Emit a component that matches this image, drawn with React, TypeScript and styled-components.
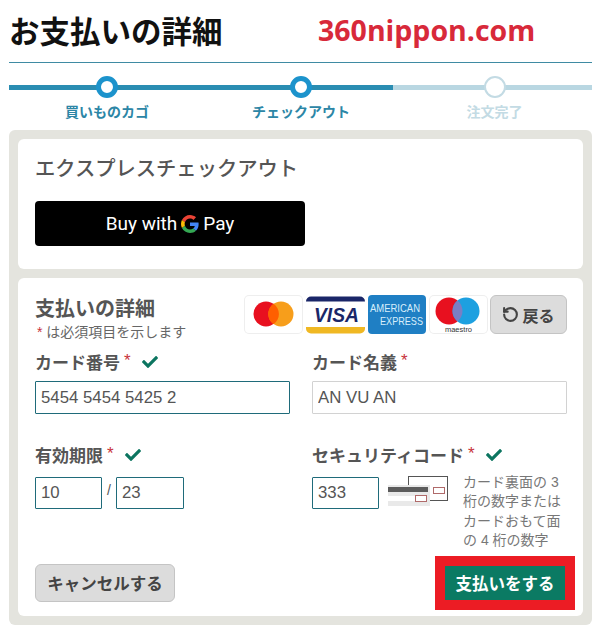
import React from "react";
import styled, { createGlobalStyle } from "styled-components";
import { FaCheck } from "react-icons/fa";
import { RotateCcw } from "lucide-react";

const JP = `"Liberation Sans", "Noto Sans CJK JP", sans-serif`;

const GlobalStyle = createGlobalStyle`
  html, body {
    margin: 0;
    background: #fff;
  }
  * {
    box-sizing: border-box;
  }
`;

const Page = styled.div`
  width: 603px;
  height: 634px;
  padding: 0 11px 0 9px;
  font-family: ${JP};
  overflow: hidden;
`;

const Header = styled.header`
  height: 63px;
  display: flex;
  align-items: center;
  border-bottom: 1px solid #3f8ba3;
  padding-bottom: 3px;
`;

const Title = styled.h1`
  margin: 0;
  width: 309px;
  font-size: 30.5px;
  font-weight: 700;
  color: #111;
`;

const Watermark = styled.span`
  margin-top: 1px;
  font-family: "Open Sans", sans-serif;
  font-size: 28.5px;
  font-weight: 700;
  color: #d8293a;
`;

const Steps = styled.ol`
  list-style: none;
  margin: 0;
  padding: 0;
  height: 67px;
  display: grid;
  grid-template-columns: 196px 192px 195px;
`;

const Step = styled.li<{ $done: boolean }>`
  position: relative;
  display: flex;
  flex-direction: column;
  align-items: center;
  padding-top: 13px;
  gap: 3px;
  color: ${(p) => (p.$done ? "#2c86a6" : "#c3dbe4")};
  font-size: 14px;
  font-weight: 700;

  &::before {
    content: "";
    position: absolute;
    left: ${(p) => (p.$done ? 0 : -4)}px;
    right: 0;
    top: 22px;
    height: 5px;
    background: ${(p) => (p.$done ? "#2a8db2" : "#b9d7e2")};
  }
`;

const Dot = styled.span<{ $done: boolean }>`
  position: relative;
  width: 22px;
  height: 22px;
  border-radius: 50%;
  background: #fff;
  border: ${(p) => (p.$done ? "5px solid #1c93cc" : "2px solid #c3dbe4")};
`;

const Panel = styled.main`
  height: 495px;
  background: #e4e4de;
  border-radius: 6px;
  padding: 9px;
  display: flex;
  flex-direction: column;
  gap: 9px;
`;

const Card = styled.section`
  background: #fff;
  border-radius: 6px;
  padding: 15px 17px;
`;

const ExpressCard = styled(Card)`
  flex: none;
  height: 130px;
`;

const ExpressTitle = styled.h2`
  margin: 0 0 17px;
  font-size: 20.3px;
  line-height: 30px;
  font-weight: 500;
  color: #555;
`;

const GPayButton = styled.button`
  width: 270px;
  height: 45px;
  border: 0;
  border-radius: 4px;
  background: #000;
  color: #fff;
  font-family: "Roboto", sans-serif;
  font-size: 19px;
  display: flex;
  align-items: center;
  justify-content: center;
  gap: 4px;
`;

const PayCard = styled(Card)`
  flex: 1;
  padding: 17px 16px 0 17px;
`;

const TopRow = styled.div`
  display: flex;
  justify-content: space-between;
  height: 50px;
`;

const Intro = styled.div`
  padding-top: 1px;
`;

const SectionTitle = styled.h3`
  margin: 0;
  font-size: 20px;
  line-height: 26px;
  font-weight: 700;
  color: #555;
`;

const Note = styled.p`
  margin: 0;
  padding-left: 2px;
  font-size: 14px;
  line-height: 20px;
  color: #666;
`;

const Star = styled.span`
  color: #c8323c;
  font-weight: 400;
`;

const Brands = styled.div`
  display: flex;
  align-items: flex-start;
  gap: 3px;
`;

const BrandBox = styled.div`
  width: 59px;
  height: 39px;
  border-radius: 5px;
  overflow: hidden;
  background: #fff;
  box-shadow: inset 0 0 0 1px #eee;
  svg {
    display: block;
  }
`;

const GrayButton = styled.button`
  background: #dcdcdc;
  border: 1px solid #c4c4c4;
  border-radius: 6px;
  color: #444;
  font-family: ${JP};
  font-weight: 700;
  font-size: 16px;
  display: flex;
  align-items: center;
  justify-content: center;
`;

const BackButton = styled(GrayButton)`
  width: 77px;
  height: 39px;
  gap: 3px;
  margin-left: -1px;
`;

const FormGrid = styled.div`
  display: grid;
  grid-template-columns: 255px 255px;
  column-gap: 22px;
  margin-top: 2px;
`;

const Field = styled.div`
  height: 93px;
`;

const Label = styled.label`
  display: flex;
  align-items: center;
  height: 28px;
  font-size: 17px;
  font-weight: 700;
  color: #555;
  gap: 4px;
`;

const Tick = styled(FaCheck)`
  color: #0c7560;
  font-size: 16px;
  margin-left: 7px;
  margin-top: 2px;
`;

const Input = styled.input<{ $valid?: boolean; $width?: number; $height?: number }>`
  display: block;
  width: ${(p) => p.$width ?? 255}px;
  height: ${(p) => p.$height ?? 33}px;
  margin-top: 6px;
  border: 1px solid ${(p) => (p.$valid ? "#1f6b7a" : "#d2d2d2")};
  border-radius: 1px;
  padding: 0 5px;
  font-family: "Liberation Sans", sans-serif;
  font-size: 16.8px;
  color: #555;
  outline: none;
`;

const DateRow = styled.div`
  display: flex;
  align-items: center;
  gap: 5px;
  margin-top: 3px;
  color: #555;
  font-size: 14px;
`;

const CvcRow = styled.div`
  display: flex;
  align-items: flex-start;
  margin-top: 3px;
`;

const CvcPicture = styled.svg`
  margin: 5px 15px 0 9px;
  flex: none;
`;

const Help = styled.p`
  margin: 2px 0 0;
  width: 104px;
  font-size: 14px;
  line-height: 19.3px;
  color: #777;
`;

const Footer = styled.div`
  display: flex;
  justify-content: space-between;
  align-items: center;
  margin-top: 23px;
  margin-right: -8px;
`;

const CancelButton = styled(GrayButton)`
  width: 140px;
  height: 38px;
  font-size: 16.5px;
`;

const PayButton = styled.button`
  width: 140px;
  height: 54px;
  border: 10px solid #ec1c24;
  background: #0b7a63;
  color: #fff;
  font-family: ${JP};
  font-size: 16.5px;
  font-weight: 700;
  padding: 0;
`;

const GoogleG = () => (
  <svg width="18" height="18" viewBox="0 0 48 48">
    <path fill="#ea4335" d="M24 9.500c3.500 0 6.700 1.200 9.200 3.600l6.800-6.800C35.900 2.400 30.500 0 24 0 14.600 0 6.500 5.400 2.600 13.200l8 6.200C12.400 13.600 17.700 9.500 24 9.500z" />
    <path fill="#4285f4" d="M47 24.500c0-1.600-.1-3.100-.4-4.500H24v9h12.900c-.6 3-2.200 5.500-4.700 7.200l7.600 5.900C44.200 38 47 31.900 47 24.500z" />
    <path fill="#fbbc05" d="M10.500 28.600c-.5-1.500-.8-3-.8-4.600s.3-3.100.8-4.600l-8-6.200C.9 16.500 0 20.100 0 24s.9 7.500 2.600 10.800l7.900-6.200z" />
    <path fill="#34a853" d="M24 48c6.500 0 11.900-2.100 15.800-5.900l-7.600-5.900c-2.100 1.400-4.900 2.300-8.200 2.300-6.300 0-11.600-4.200-13.500-9.900l-8 6.200C6.500 42.600 14.600 48 24 48z" />
  </svg>
);

const Mastercard = () => (
  <svg width="59" height="39" viewBox="0 0 59 39">
    <circle cx="22" cy="19" r="12.500" fill="#e8101f" />
    <circle cx="37" cy="19" r="12.500" fill="#f79e1b" />
    <path d="M29.500 8.700a12.500 12.500 0 0 1 0 20.600a12.500 12.500 0 0 1 0-20.600z" fill="#ff5f00" />
  </svg>
);

const Visa = () => (
  <svg width="59" height="39" viewBox="0 0 59 39">
    <path d="M0 6.500a5 5 0 0 1 5-5h49a5 5 0 0 1 5 5z" fill="#1a2668" />
    <path d="M0 32h59v1.500a5 5 0 0 1-5 5H5a5 5 0 0 1-5-5z" fill="#f0b823" />
    <text x="8" y="27" fontFamily="Liberation Sans" fontSize="21" fontWeight="700" fontStyle="italic" textLength="45" lengthAdjust="spacingAndGlyphs" fill="#1a2668">
      VISA
    </text>
  </svg>
);

const Amex = () => (
  <svg width="58" height="39" viewBox="0 0 58 39">
    <rect width="58" height="39" rx="4" fill="#1f7fc4" />
    <text x="2" y="17" fontFamily="Liberation Sans" fontSize="10.500" textLength="50" lengthAdjust="spacingAndGlyphs" fill="#d8eefb">
      AMERICAN
    </text>
    <text x="12" y="30" fontFamily="Liberation Sans" fontSize="10.500" textLength="43" lengthAdjust="spacingAndGlyphs" fill="#d8eefb">
      EXPRESS
    </text>
  </svg>
);

const Maestro = () => (
  <svg width="59" height="39" viewBox="0 0 59 39">
    <circle cx="20" cy="16" r="13.500" fill="#e8101f" />
    <circle cx="37" cy="16" r="13.500" fill="#1da0e0" />
    <path d="M28.500 5.500a13.500 13.500 0 0 1 0 21a13.500 13.500 0 0 1 0-21z" fill="#7a7fc4" />
    <text x="29.500" y="37" textAnchor="middle" fontFamily="Liberation Sans" fontSize="7.500" fill="#333">
      maestro
    </text>
  </svg>
);

const CvcIllustration = () => (
  <CvcPicture width="60" height="30" viewBox="0 0 60 30">
    <rect x="20.500" y="0.500" width="39" height="24" fill="#fff" stroke="#555" />
    <rect x="0" y="9" width="42" height="21" fill="#e9e9e9" />
    <rect x="0" y="11" width="40" height="5" fill="#5c5c5c" />
    <rect x="0" y="20" width="27" height="5" fill="#fff" />
    <rect x="27.500" y="19.500" width="11" height="6" fill="#fff" stroke="#b06a6a" />
    <rect x="45.500" y="11.500" width="11" height="6" fill="#fff" stroke="#b06a6a" />
  </CvcPicture>
);

const App: React.FunctionComponent = () => {
  return (
    <Page>
      <GlobalStyle />
      <Header>
        <Title>お支払いの詳細</Title>
        <Watermark>360nippon.com</Watermark>
      </Header>

      <Steps>
        <Step $done>
          <Dot $done />
          買いものカゴ
        </Step>
        <Step $done>
          <Dot $done />
          チェックアウト
        </Step>
        <Step $done={false}>
          <Dot $done={false} />
          注文完了
        </Step>
      </Steps>

      <Panel>
        <ExpressCard>
          <ExpressTitle>エクスプレスチェックアウト</ExpressTitle>
          <GPayButton>
            Buy with <GoogleG /> Pay
          </GPayButton>
        </ExpressCard>

        <PayCard>
          <TopRow>
            <Intro>
              <SectionTitle>支払いの詳細</SectionTitle>
              <Note>
                <Star>*</Star> は必須項目を示します
              </Note>
            </Intro>
            <Brands>
              <BrandBox>
                <Mastercard />
              </BrandBox>
              <Visa />
              <Amex />
              <BrandBox>
                <Maestro />
              </BrandBox>
              <BackButton>
                <RotateCcw size={17} strokeWidth={3} />
                戻る
              </BackButton>
            </Brands>
          </TopRow>

          <FormGrid>
            <Field>
              <Label>
                カード番号 <Star>*</Star>
                <Tick />
              </Label>
              <Input $valid readOnly value="5454 5454 5425 2" />
            </Field>
            <Field>
              <Label>
                カード名義 <Star>*</Star>
              </Label>
              <Input readOnly value="AN VU AN" />
            </Field>
            <Field>
              <Label>
                有効期限 <Star>*</Star>
                <Tick />
              </Label>
              <DateRow>
                <Input $valid $width={67} $height={32} readOnly value="10" />/
                <Input $valid $width={68} $height={32} readOnly value="23" />
              </DateRow>
            </Field>
            <Field>
              <Label>
                セキュリティコード <Star>*</Star>
                <Tick />
              </Label>
              <CvcRow>
                <Input $valid $width={67} $height={32} readOnly value="333" />
                <CvcIllustration />
                <Help>カード裏面の 3 桁の数字または カードおもて面の 4 桁の数字</Help>
              </CvcRow>
            </Field>
          </FormGrid>

          <Footer>
            <CancelButton>キャンセルする</CancelButton>
            <PayButton>支払いをする</PayButton>
          </Footer>
        </PayCard>
      </Panel>
    </Page>
  );
};

export default App;
